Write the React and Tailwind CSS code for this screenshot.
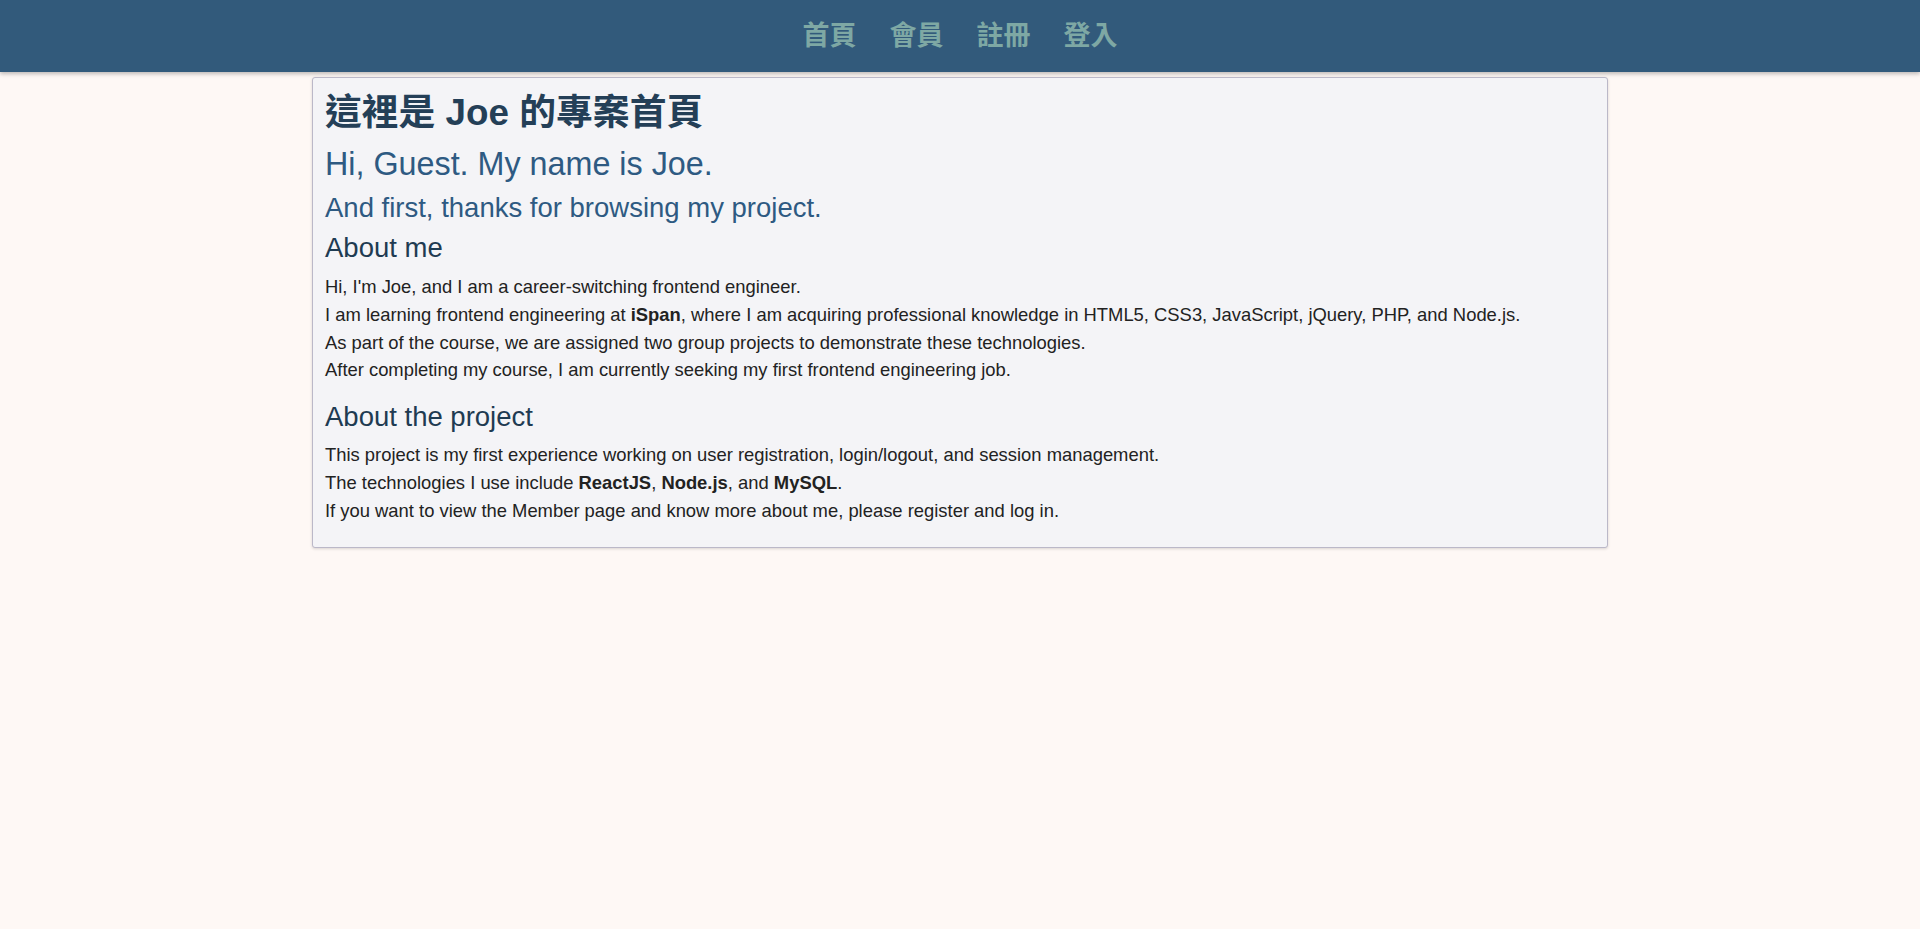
export default function App() {
  const font = { fontFamily: '"Liberation Sans", Arial, "Noto Sans CJK TC", sans-serif' };
  return (
    <div className="min-h-[929px] bg-[#fef8f5]" style={font}>
      <header className="h-[72px] bg-[#325a7b] shadow-[0_2px_4px_rgba(0,0,0,0.25)] flex items-center justify-center">
        <nav className="flex gap-[33px] text-[27px] font-bold text-[#7ea8a4] leading-none">
          <a href="#">首頁</a>
          <a href="#">會員</a>
          <a href="#">註冊</a>
          <a href="#">登入</a>
        </nav>
      </header>
      <main className="mt-[5px] mx-auto w-[1296px] bg-[#f4f4f7] border border-[#bbb8c8] rounded-[3px] shadow-[0_1px_3px_rgba(0,0,0,0.15)] px-[12px] pt-[15px] pb-[22px]">
        <h1 className="text-[36.8px] leading-[40px] font-bold text-[#243f57]">這裡是 Joe 的專案首頁</h1>
        <h2 className="mt-[11px] text-[32.3px] leading-[40px] text-[#2e5a82]">Hi, Guest. My name is Joe.</h2>
        <h3 className="mt-[7px] text-[27.5px] leading-[34px] text-[#2e5a82]">And first, thanks for browsing my project.</h3>
        <h3 className="mt-[6px] text-[27.5px] leading-[34px] text-[#1f3b52]">About me</h3>
        <div className="mt-[8px] text-[18.4px] leading-[27.8px] text-[#222222]">
          <p>Hi, I'm Joe, and I am a career-switching frontend engineer.</p>
          <p>
            I am learning frontend engineering at <b>iSpan</b>, where I am acquiring professional knowledge in HTML5, CSS3, JavaScript, jQuery, PHP, and Node.js.
          </p>
          <p>As part of the course, we are assigned two group projects to demonstrate these technologies.</p>
          <p>After completing my course, I am currently seeking my first frontend engineering job.</p>
        </div>
        <h3 className="mt-[16px] text-[27.5px] leading-[34px] text-[#1f3b52]">About the project</h3>
        <div className="mt-[7px] text-[18.4px] leading-[27.8px] text-[#222222]">
          <p>This project is my first experience working on user registration, login/logout, and session management.</p>
          <p>
            The technologies I use include <b>ReactJS</b>, <b>Node.js</b>, and <b>MySQL</b>.
          </p>
          <p>If you want to view the Member page and know more about me, please register and log in.</p>
        </div>
      </main>
    </div>
  );
}
